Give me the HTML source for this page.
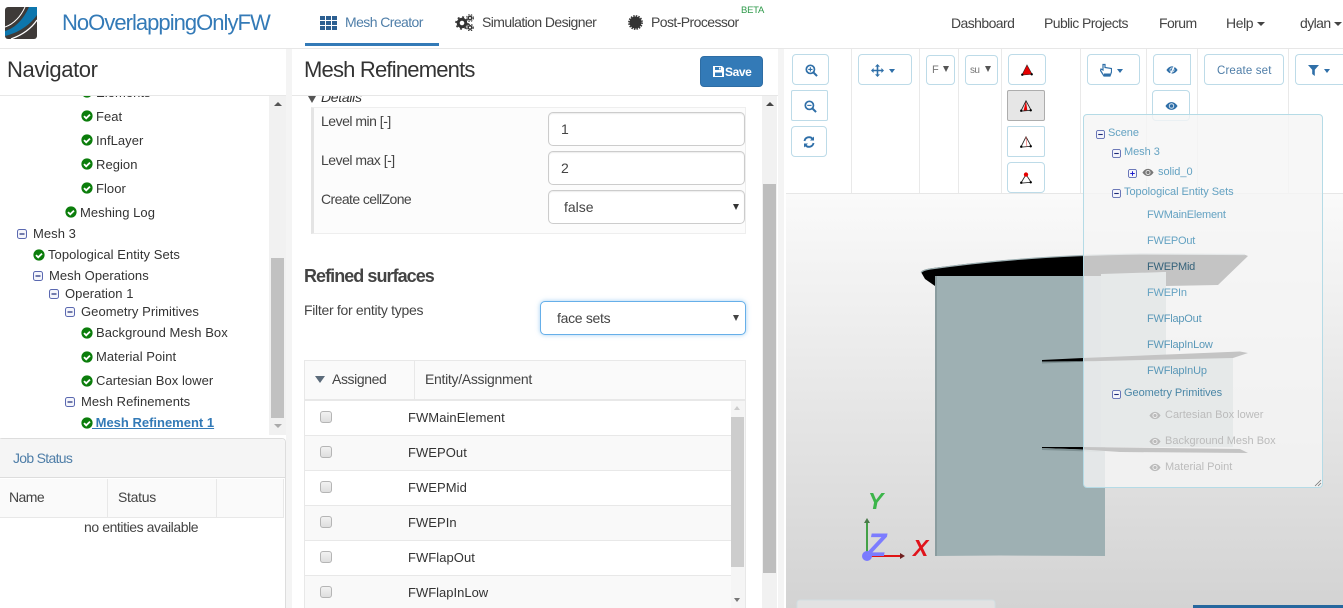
<!DOCTYPE html>
<html><head><meta charset="utf-8"><title>Mesh Refinements</title>
<style>
html,body{margin:0;padding:0;background:#fff;width:1343px;height:608px;overflow:hidden}
body{font:14px/20px "Liberation Sans",sans-serif;color:#333}
#root{position:relative;width:1343px;height:608px;overflow:hidden}
.a,.l,.n,.k,.m,.p,.pi,.b,.box{position:absolute}
.l,.n,.k,.m,.p,.pi{white-space:nowrap}
.l{letter-spacing:-.58px;color:#444}
.w{letter-spacing:-.3px}
.n{color:#333;font-size:13px;letter-spacing:.05px;margin-top:1px}
.h{font-size:22px;letter-spacing:-.8px;color:#333;line-height:30px}
.b{box-sizing:border-box;border:1px solid #bddbe8;border-radius:4px;background:#fff}
.box{box-sizing:border-box;border:1px solid #ccc;border-radius:5px;background:#fff;box-shadow:inset 0 1px 1px rgba(0,0,0,.075)}
.row{position:absolute;left:305px;width:426px;height:35px;box-sizing:border-box;border-bottom:1px solid #e8e8e8}
.cb{position:absolute;left:320px;width:12px;height:12px;box-sizing:border-box;border:1px solid #b5b5b5;border-radius:3px;background:linear-gradient(#f2f2f2,#dedede)}
.p{font-size:11px;line-height:14px;color:#64a2c2;letter-spacing:-.05px}
.f{letter-spacing:-.2px}
.pi{font-size:11px;line-height:14px;color:#bbb;font-weight:normal}
svg{display:block}
.i{position:absolute}
</style></head>
<body>
<div id="root">
<svg width="0" height="0" style="position:absolute">
<defs>
<symbol id="ck" viewBox="0 0 12 12"><circle cx="6" cy="6" r="5.6" fill="#0b7d0b"/><path d="M3 6.100l2.200 2.200L9 4.600" fill="none" stroke="#fff" stroke-width="1.800"/></symbol>
<symbol id="mn" viewBox="0 0 10 10"><rect x=".5" y=".5" width="9" height="9" rx="2" fill="#f4f5fb" stroke="#5a68b0"/><path d="M2.500 5h5" stroke="#1d2a78" stroke-width="1.200"/></symbol>
<symbol id="pl" viewBox="0 0 10 10"><rect x=".5" y=".5" width="9" height="9" rx="2" fill="#f4f5fb" stroke="#5a68b0"/><path d="M2.500 5h5M5 2.500v5" stroke="#1d1dcc" stroke-width="1.100"/></symbol>
<symbol id="eye" viewBox="0 0 14 10"><path d="M.5 5C2.500 2 4.600.8 7 .8S11.500 2 13.500 5C11.500 8 9.400 9.200 7 9.200S2.500 8 .5 5z" fill="currentColor"/><circle cx="7" cy="5" r="2.900" fill="#fff" opacity=".85"/><circle cx="7" cy="5" r="1.900" fill="currentColor"/></symbol>
<symbol id="mag" viewBox="0 0 14 14"><circle cx="5.800" cy="5.800" r="4.400" fill="none" stroke="#2f6fa8" stroke-width="1.800"/><path d="M9 9l4 4" stroke="#2f6fa8" stroke-width="2.200"/></symbol>
</defs>
</svg>

<!-- 3D viewport -->
<svg class="i" style="left:0;top:0" width="1343" height="608" viewBox="0 0 1343 608">
<defs><linearGradient id="bg" x1="0" y1="0" x2="0" y2="1"><stop offset="0" stop-color="#fafafa"/><stop offset="1" stop-color="#d3d3d3"/></linearGradient></defs>
<rect x="786" y="193" width="557" height="415" fill="url(#bg)"/>
<path d="M921 272Q922 270 930 268.500C990 260 1060 255 1140 254L1243 254L1248 256L1218 285L1166 286L935 286L925 279Z" fill="#000"/>
<path d="M921 272.500Q923 270 930 269C990 260.500 1060 255 1140 254L1245 254.500" fill="none" stroke="#9eb0b3" stroke-width="1.200"/>
<path d="M935 276L1101 276L1166 272V355H1233V447H1105V556L1000 555.500L935 556Z" fill="#9eb0b3"/>
<path d="M1101 274L1166 272V355H1233V447H1101Z" fill="#a8b7ba"/>
<path d="M935 276h2v280h-2z" fill="#8a9c9f"/>
<path d="M1042 360L1083 358L1240 351.500L1248 353L1233 358L1100 361L1042 363Z" fill="#000"/>
<path d="M1042 361.500L1100 361L1042 363.500Z" fill="#7f9194"/>
<path d="M1042 447L1083 447L1240 449L1248 453L1120 452L1083 449.500L1042 448Z" fill="#000"/>
<path d="M1042 448L1083 449.500L1105 452L1042 450Z" fill="#7f9194"/>
<path d="M867 556V522" stroke="#43a047" stroke-width="2"/><path d="M867 518l-3 5h6z" fill="#4a7a4a"/>
<path d="M867 556H901" stroke="#e01414" stroke-width="2"/><path d="M905 556l-5-3v6z" fill="#702020"/>
<circle cx="867" cy="556" r="5" fill="#7a7aff"/>
<text x="868" y="509" font-family="Liberation Sans" font-weight="bold" font-style="italic" font-size="23" fill="#3cb54a">Y</text>
<text x="913" y="556" font-family="Liberation Sans" font-weight="bold" font-style="italic" font-size="23" fill="#e0141c">X</text>
<text x="867" y="556" font-family="Liberation Sans" font-weight="bold" font-style="italic" font-size="32" fill="#7c7cff">Z</text>
<rect x="797" y="600" width="198" height="12" rx="3" fill="#e2e2e2" stroke="#d2dfe3"/>
<rect x="1193" y="605" width="150" height="4" fill="#26679e"/>
</svg>

<!-- Top navbar -->
<div class="a" style="left:0;top:48px;width:1343px;height:1px;background:#e7e7e7"></div>
<svg class="i" style="left:5px;top:7px" width="32" height="32" viewBox="0 0 32 32">
<rect width="32" height="32" rx="3" fill="#3e3a38"/>
<path d="M0 24C11 21 19 11 24 0H32V8C25 18 13 26 0 29Z" fill="#0d76ad"/>
<path d="M0 20C9 17 16 9 20 0" fill="none" stroke="#fff" stroke-width="1"/>
<path d="M6 32C17 28 26 22 32 13" fill="none" stroke="#fff" stroke-width="1.200"/>
</svg>
<div class="l" style="left:62px;top:8px;font-size:22px;line-height:30px;color:#337ab7;letter-spacing:-.97px">NoOverlappingOnlyFW</div>
<div class="a" style="left:305px;top:43px;width:134px;height:3px;background:#337ab7"></div>
<svg class="i" style="left:320px;top:16px" width="17" height="14" viewBox="0 0 17 14"><path fill="#2c5f91" d="M0 0h5v4H0zM6 0h5v4H6zM12 0h5v4h-5zM0 5h5v4H0zM6 5h5v4H6zM12 5h5v4h-5zM0 10h5v4H0zM6 10h5v4H6zM12 10h5v4h-5z"/></svg>
<div class="l" style="left:345px;top:12px;color:#4f7ea8">Mesh Creator</div>
<svg class="i" style="left:455px;top:14px" width="19" height="17" viewBox="0 0 19 17"><g fill="none" stroke="#333"><circle cx="7" cy="9" r="3.800" stroke-width="3"/><circle cx="7" cy="9" r="6" stroke-width="1.600" stroke-dasharray="2 2.700"/><circle cx="15" cy="4" r="1.800" stroke-width="1.500"/><circle cx="15" cy="4" r="3.400" stroke-width="1" stroke-dasharray="1.500 1.300"/><circle cx="15" cy="13.500" r="1.800" stroke-width="1.500"/><circle cx="15" cy="13.500" r="3.300" stroke-width="1" stroke-dasharray="1.500 1.300"/></g></svg>
<div class="l" style="left:482px;top:12px">Simulation Designer</div>
<svg class="i" style="left:628px;top:15px" width="15" height="15" viewBox="0 0 15 15"><circle cx="7.500" cy="7.500" r="6" fill="#333"/><circle cx="7.500" cy="7.500" r="6.600" fill="none" stroke="#333" stroke-width="1.600" stroke-dasharray="1.500 1.100"/></svg>
<div class="l" style="left:651px;top:12px">Post-Processor</div>
<div class="l" style="left:741px;top:4px;font-size:9.500px;line-height:14px;color:#2e9a4a;letter-spacing:-.25px">BETA</div>
<div class="l" style="left:951px;top:13px">Dashboard</div>
<div class="l" style="left:1044px;top:13px">Public Projects</div>
<div class="l" style="left:1159px;top:13px">Forum</div>
<div class="l" style="left:1226px;top:13px;letter-spacing:-.4px">Help</div>
<div class="a" style="left:1257px;top:22px;border:4px solid transparent;border-top-color:#444;border-bottom:0"></div>
<div class="l" style="left:1300px;top:13px">dylan</div>
<div class="a" style="left:1334px;top:22px;border:4px solid transparent;border-top-color:#444;border-bottom:0"></div>

<!-- Column gaps -->
<div class="a" style="left:286px;top:49px;width:6px;height:559px;background:#f4f4f4"></div>
<div class="a" style="left:778px;top:49px;width:6px;height:559px;background:#f4f4f4"></div>

<!-- Navigator -->
<div class="l h" style="left:7px;top:55px;letter-spacing:-.4px">Navigator</div>
<div class="a" style="left:0;top:95px;width:286px;height:1px;background:#e7e7e7"></div>
<div class="a" style="left:0;top:96px;width:269px;height:340px;overflow:hidden">
  <div style="position:absolute;left:0;top:-96px;width:269px;height:440px">
    <svg class="i" style="left:81px;top:86px" width="12" height="12"><use href="#ck"/></svg><div class="n" style="left:96px;top:82px">Elements</div>
    <svg class="i" style="left:81px;top:110px" width="12" height="12"><use href="#ck"/></svg><div class="n" style="left:96px;top:106px">Feat</div>
    <svg class="i" style="left:81px;top:134px" width="12" height="12"><use href="#ck"/></svg><div class="n" style="left:96px;top:130px">InfLayer</div>
    <svg class="i" style="left:81px;top:158px" width="12" height="12"><use href="#ck"/></svg><div class="n" style="left:96px;top:154px">Region</div>
    <svg class="i" style="left:81px;top:182px" width="12" height="12"><use href="#ck"/></svg><div class="n" style="left:96px;top:178px">Floor</div>
    <svg class="i" style="left:65px;top:206px" width="12" height="12"><use href="#ck"/></svg><div class="n" style="left:80px;top:202px">Meshing Log</div>
    <svg class="i" style="left:17px;top:229px" width="10" height="10"><use href="#mn"/></svg><div class="n" style="left:33px;top:223px">Mesh 3</div>
    <svg class="i" style="left:33px;top:249px" width="12" height="12"><use href="#ck"/></svg><div class="n" style="left:48px;top:244px">Topological Entity Sets</div>
    <svg class="i" style="left:33px;top:271px" width="10" height="10"><use href="#mn"/></svg><div class="n" style="left:49px;top:265px">Mesh Operations</div>
    <svg class="i" style="left:49px;top:289px" width="10" height="10"><use href="#mn"/></svg><div class="n" style="left:65px;top:283px">Operation 1</div>
    <svg class="i" style="left:65px;top:307px" width="10" height="10"><use href="#mn"/></svg><div class="n" style="left:81px;top:301px">Geometry Primitives</div>
    <svg class="i" style="left:81px;top:327px" width="12" height="12"><use href="#ck"/></svg><div class="n" style="left:96px;top:322px">Background Mesh Box</div>
    <svg class="i" style="left:81px;top:351px" width="12" height="12"><use href="#ck"/></svg><div class="n" style="left:96px;top:346px">Material Point</div>
    <svg class="i" style="left:81px;top:375px" width="12" height="12"><use href="#ck"/></svg><div class="n" style="left:96px;top:370px">Cartesian Box lower</div>
    <svg class="i" style="left:65px;top:397px" width="10" height="10"><use href="#mn"/></svg><div class="n" style="left:81px;top:391px">Mesh Refinements</div>
    <svg class="i" style="left:81px;top:417px" width="12" height="12"><use href="#ck"/></svg><div class="n" style="left:92px;top:412px;color:#337ab7;font-weight:bold;text-decoration:underline;white-space:pre;letter-spacing:0"> Mesh Refinement 1</div>
  </div>
</div>
<div class="a" style="left:269px;top:96px;width:17px;height:339px;background:#f1f1f1"></div>
<div class="a" style="left:271px;top:258px;width:13px;height:160px;background:#c1c1c1"></div>
<div class="a" style="left:274px;top:102px;border:4px solid transparent;border-bottom-color:#555;border-top:0"></div>
<div class="a" style="left:274px;top:424px;border:4px solid transparent;border-top-color:#aaa;border-bottom:0"></div>

<!-- Job status -->
<div class="a" style="left:-2px;top:438px;width:288px;height:170px;box-sizing:border-box;border:1px solid #ddd;border-bottom:0;border-radius:4px 4px 0 0;background:#fff"></div>
<div class="a" style="left:0;top:439px;width:285px;height:39px;background:#f5f5f5;border-bottom:1px solid #ddd;box-sizing:border-box;border-top-right-radius:4px"></div>
<div class="l" style="left:13px;top:448px;color:#4f7ea8;letter-spacing:-.7px">Job Status</div>
<div class="a" style="left:0;top:479px;width:283px;height:39px;background:#fafafa;border-bottom:1px solid #e8e8e8;box-sizing:border-box"></div>
<div class="a" style="left:107px;top:479px;width:1px;height:39px;background:#e8e8e8"></div>
<div class="a" style="left:216px;top:479px;width:1px;height:39px;background:#e8e8e8"></div>
<div class="a" style="left:283px;top:479px;width:1px;height:39px;background:#e8e8e8"></div>
<div class="l" style="left:9px;top:487px">Name</div>
<div class="l w" style="left:118px;top:487px">Status</div>
<div class="l" style="left:84px;top:517px;letter-spacing:-.42px">no entities available</div>

<!-- Middle panel -->
<div class="l h" style="left:304px;top:55px">Mesh Refinements</div>
<div class="a" style="left:700px;top:56px;width:63px;height:31px;border-radius:4px;background:#337ab7;border:1px solid #2e6da4;box-sizing:border-box"></div>
<svg class="i" style="left:713px;top:66px" width="11" height="11" viewBox="0 0 11 11"><path d="M0 0h9l2 2v9H0z" fill="#fff"/><path d="M2 1h6v3H2zM2 6.500h7V10H2z" fill="#337ab7"/><path d="M6 1.500h1.500v2H6z" fill="#fff"/></svg>
<div class="l" style="left:725px;top:62px;font-size:12px;color:#fff;font-weight:bold;letter-spacing:-.4px">Save</div>
<div class="a" style="left:292px;top:95px;width:486px;height:1px;background:#e7e7e7"></div>

<div class="a" style="left:292px;top:96px;width:470px;height:512px;overflow:hidden">
  <div class="l w" style="left:29px;top:-9px;font-style:italic;color:#333">Details</div>
</div>
<div class="a" style="left:308px;top:96px;border:4.500px solid transparent;border-top:7px solid #555;border-bottom:0"></div>
<div class="a" style="left:311px;top:107px;width:435px;height:127px;box-sizing:border-box;background:#fcfcfc;border:1px solid #eee;border-left:3px solid #e4e4e4"></div>
<div class="l" style="left:321px;top:111px;letter-spacing:-.5px">Level min [-]</div>
<div class="l" style="left:321px;top:150px;letter-spacing:-.5px">Level max [-]</div>
<div class="l" style="left:321px;top:189px">Create cellZone</div>
<div class="box" style="left:548px;top:112px;width:197px;height:34px"></div><div class="l w" style="left:561px;top:119px">1</div>
<div class="box" style="left:548px;top:151px;width:197px;height:34px"></div><div class="l w" style="left:561px;top:158px">2</div>
<div class="box" style="left:548px;top:190px;width:197px;height:34px"></div><div class="l" style="left:564px;top:197px;letter-spacing:0">false</div>
<div class="a" style="left:733px;top:204px;border:3.500px solid transparent;border-top:6px solid #333;border-bottom:0"></div>

<div class="l" style="left:304px;top:264px;font-size:18px;line-height:24px;font-weight:bold;color:#444;letter-spacing:-.95px">Refined surfaces</div>
<div class="l w" style="left:304px;top:300px">Filter for entity types</div>
<div class="box" style="left:540px;top:301px;width:206px;height:34px;border-color:#66afe9;box-shadow:0 0 5px rgba(102,175,233,.6)"></div>
<div class="l w" style="left:557px;top:308px">face sets</div>
<div class="a" style="left:733px;top:315px;border:3.500px solid transparent;border-top:6px solid #444;border-bottom:0"></div>

<div class="a" style="left:304px;top:360px;width:442px;height:40px;box-sizing:border-box;background:#fafafa;border:1px solid #e8e8e8"></div>
<div class="a" style="left:414px;top:361px;width:1px;height:39px;background:#e8e8e8"></div>
<div class="a" style="left:315px;top:376px;border:5px solid transparent;border-top:7px solid #5c6b7a;border-bottom:0"></div>
<div class="l w" style="left:332px;top:369px;letter-spacing:-.4px">Assigned</div>
<div class="l w" style="left:425px;top:369px">Entity/Assignment</div>
<div class="a" style="left:304px;top:400px;width:1px;height:208px;background:#e8e8e8"></div>
<div class="a" style="left:745px;top:400px;width:1px;height:208px;background:#e8e8e8"></div>
<div class="a" style="left:305px;top:400px;width:440px;height:1px;background:#e8e8e8"></div>
<div class="row" style="top:401px"></div>
<div class="row" style="top:436px;background:#f9f9f9"></div>
<div class="row" style="top:471px"></div>
<div class="row" style="top:506px;background:#f9f9f9"></div>
<div class="row" style="top:541px"></div>
<div class="row" style="top:576px;height:32px;background:#f9f9f9;border-bottom:0"></div>
<div class="cb" style="top:411px"></div><div class="n" style="left:408px;top:407px">FWMainElement</div>
<div class="cb" style="top:446px"></div><div class="n" style="left:408px;top:442px">FWEPOut</div>
<div class="cb" style="top:481px"></div><div class="n" style="left:408px;top:477px">FWEPMid</div>
<div class="cb" style="top:516px"></div><div class="n" style="left:408px;top:512px">FWEPIn</div>
<div class="cb" style="top:551px"></div><div class="n" style="left:408px;top:547px">FWFlapOut</div>
<div class="cb" style="top:586px"></div><div class="n" style="left:408px;top:582px;letter-spacing:0">FWFlapInLow</div>
<div class="a" style="left:731px;top:401px;width:14px;height:207px;background:#f5f5f5"></div>
<div class="a" style="left:731px;top:417px;width:13px;height:150px;background:#cdcdcd"></div>
<div class="a" style="left:734px;top:406px;border:3.500px solid transparent;border-bottom:4px solid #ccc;border-top:0"></div>
<div class="a" style="left:734px;top:598px;border:3.500px solid transparent;border-top:4px solid #777;border-bottom:0"></div>

<div class="a" style="left:762px;top:96px;width:15px;height:512px;background:#f1f1f1"></div>
<div class="a" style="left:763px;top:184px;width:13px;height:389px;background:#bebebe"></div>
<div class="a" style="left:766px;top:102px;border:4px solid transparent;border-bottom-color:#444;border-top:0"></div>

<!-- Toolbar -->
<div class="a" style="left:784px;top:49px;width:559px;height:144px;background:#fff"></div>
<div class="a" style="left:786px;top:193px;width:557px;height:1px;background:#e7e7e7"></div>
<div class="a" style="left:851px;top:49px;width:1px;height:144px;background:#e9e9e9"></div>
<div class="a" style="left:919px;top:49px;width:1px;height:144px;background:#e9e9e9"></div>
<div class="a" style="left:958px;top:49px;width:1px;height:144px;background:#e9e9e9"></div>
<div class="a" style="left:1001px;top:49px;width:1px;height:144px;background:#e9e9e9"></div>
<div class="a" style="left:1080px;top:49px;width:1px;height:144px;background:#e9e9e9"></div>
<div class="a" style="left:1146px;top:49px;width:1px;height:144px;background:#e9e9e9"></div>
<div class="a" style="left:1197px;top:49px;width:1px;height:144px;background:#e9e9e9"></div>
<div class="a" style="left:1288px;top:49px;width:1px;height:144px;background:#e9e9e9"></div>

<div class="b" style="left:792px;top:54px;width:37px;height:31px"></div>
<svg class="i" style="left:805px;top:64px" width="13" height="13" viewBox="0 0 14 14"><use href="#mag"/><path d="M3.500 5.800h4.600M5.800 3.500v4.600" stroke="#2f6fa8" stroke-width="1.200"/></svg>
<div class="b" style="left:791px;top:90px;width:37px;height:31px;border-radius:2px"></div>
<svg class="i" style="left:804px;top:100px" width="13" height="13" viewBox="0 0 14 14"><use href="#mag"/><path d="M3.500 5.800h4.600" stroke="#2f6fa8" stroke-width="1.200"/></svg>
<div class="b" style="left:791px;top:126px;width:36px;height:31px"></div>
<svg class="i" style="left:803px;top:136px" width="12" height="12" viewBox="0 0 12 12"><path d="M1.500 5A4.600 4.600 0 0 1 9.700 3M10.500 7A4.600 4.600 0 0 1 2.300 9" fill="none" stroke="#2f6fa8" stroke-width="1.900"/><path d="M11 .5V4.500H7zM1 11.500V7.500H5z" fill="#2f6fa8"/></svg>

<div class="b" style="left:858px;top:54px;width:54px;height:31px"></div>
<svg class="i" style="left:871px;top:64px" width="13" height="13" viewBox="0 0 13 13"><path d="M6.500 0L9 2.600H7.300V5.700H10.400V4L13 6.500L10.400 9V7.300H7.300V10.400H9L6.500 13L4 10.400H5.700V7.300H2.600V9L0 6.500L2.600 4V5.700H5.700V2.600H4z" fill="#2f6fa8"/></svg>
<div class="a" style="left:889px;top:69px;border:3.500px solid transparent;border-top:4px solid #2f6fa8;border-bottom:0"></div>

<div class="b" style="left:926px;top:55px;width:29px;height:30px"></div>
<div class="l" style="left:932px;top:61px;font-size:11px;line-height:18px;color:#777">F</div>
<div class="a" style="left:943px;top:66px;border:3.500px solid transparent;border-top:6px solid #555;border-bottom:0"></div>
<div class="b" style="left:965px;top:55px;width:33px;height:30px"></div>
<div class="l" style="left:970px;top:62px;font-size:10px;line-height:18px;color:#777;width:12px;overflow:hidden">su</div>
<div class="a" style="left:985px;top:66px;border:3.500px solid transparent;border-top:6px solid #555;border-bottom:0"></div>

<div class="b" style="left:1008px;top:54px;width:38px;height:31px"></div>
<svg class="i" style="left:1021px;top:64px" width="12" height="12" viewBox="0 0 14 14"><path d="M7 1L13 12L1 13z" fill="#e60000" stroke="#222" stroke-width=".6"/><circle cx="1.500" cy="12.500" r="1.400"/><circle cx="12.500" cy="12" r="1.400"/></svg>
<div class="b" style="left:1007px;top:90px;width:38px;height:31px;background:#e6e6e6;border-color:#adadad;border-radius:2px"></div>
<svg class="i" style="left:1020px;top:100px" width="12" height="12" viewBox="0 0 14 14"><path d="M7 1L8.500 12L4 13z" fill="#e60000"/><path d="M7 1L13 12L1 13z" fill="none" stroke="#222"/><circle cx="1.500" cy="12.500" r="1.400"/><circle cx="12.500" cy="12" r="1.400"/></svg>
<div class="b" style="left:1007px;top:126px;width:38px;height:31px;border-radius:2px"></div>
<svg class="i" style="left:1020px;top:136px" width="12" height="12" viewBox="0 0 14 14"><path d="M7 1L13 12L1 13z" fill="none" stroke="#222"/><path d="M7 1L8 12" stroke="#e66" stroke-width=".8"/><circle cx="1.500" cy="12.500" r="1.400"/><circle cx="12.500" cy="12" r="1.400"/></svg>
<div class="b" style="left:1007px;top:162px;width:38px;height:31px"></div>
<svg class="i" style="left:1020px;top:172px" width="12" height="12" viewBox="0 0 14 14"><path d="M7 3L13 12L1 13z" fill="none" stroke="#222"/><circle cx="7" cy="3" r="2.500" fill="#e60000"/><circle cx="1.500" cy="12.500" r="1.400"/><circle cx="12.500" cy="12" r="1.400"/></svg>

<div class="b" style="left:1087px;top:54px;width:53px;height:31px"></div>
<svg class="i" style="left:1100px;top:63px" width="12" height="14" viewBox="0 0 12 14"><path d="M3 1.500V7L1 6 .5 7.500 4 13H10L11.500 9V5.500L5 4.500V1.500z" fill="#fff" stroke="#2f6fa8" stroke-width="1.200"/><path d="M4 10.500H10V13H4z" fill="#2f6fa8"/></svg>
<div class="a" style="left:1117px;top:69px;border:3.500px solid transparent;border-top:4px solid #2f6fa8;border-bottom:0"></div>

<div class="b" style="left:1153px;top:54px;width:38px;height:31px;border-radius:4px 0 0 4px"></div>
<svg class="i" style="left:1166px;top:65px" width="12" height="10" viewBox="0 0 14 10"><use href="#eye" color="#2f6fa8"/><path d="M10 0L5 10" stroke="#fff" stroke-width="1.500"/></svg>
<div class="b" style="left:1152px;top:90px;width:38px;height:31px"></div>
<svg class="i" style="left:1165px;top:101px" width="13" height="10" viewBox="0 0 14 10"><use href="#eye" color="#2f6fa8"/></svg>
<div class="b" style="left:1204px;top:54px;width:80px;height:31px"></div>
<div class="l" style="left:1217px;top:61px;font-size:11.500px;color:#4f7ea8;letter-spacing:.15px">Create set</div>
<div class="b" style="left:1295px;top:54px;width:48px;height:31px;border-right:0;border-radius:4px 0 0 4px"></div>
<svg class="i" style="left:1308px;top:65px" width="11" height="11" viewBox="0 0 11 11"><path d="M0 0H11L6.800 4.700V11L4.200 9V4.700z" fill="#2f6fa8"/></svg>
<div class="a" style="left:1324px;top:69px;border:3.500px solid transparent;border-top:4px solid #2f6fa8;border-bottom:0"></div>

<!-- Scene panel -->
<div class="a" style="left:1083px;top:114px;width:240px;height:374px;box-sizing:border-box;border:1px solid #b5dbe6;border-radius:4px;background:rgba(245,245,245,.8)"></div>
<svg class="i" style="left:1096px;top:130px" width="9" height="9" viewBox="0 0 10 10"><use href="#mn"/></svg><div class="p" style="left:1108px;top:126px">Scene</div>
<svg class="i" style="left:1112px;top:149px" width="9" height="9" viewBox="0 0 10 10"><use href="#mn"/></svg><div class="p" style="left:1124px;top:145px">Mesh 3</div>
<svg class="i" style="left:1128px;top:169px" width="9" height="9" viewBox="0 0 10 10"><use href="#pl"/></svg>
<svg class="i" style="left:1142px;top:168px" width="12" height="9" viewBox="0 0 14 10"><use href="#eye" color="#777"/></svg><div class="p" style="left:1158px;top:165px">solid_0</div>
<svg class="i" style="left:1112px;top:189px" width="9" height="9" viewBox="0 0 10 10"><use href="#mn"/></svg><div class="p" style="left:1124px;top:185px">Topological Entity Sets</div>
<div class="p f" style="left:1147px;top:208px">FWMainElement</div>
<div class="p f" style="left:1147px;top:234px">FWEPOut</div>
<div class="p f" style="left:1147px;top:260px;color:#35627a">FWEPMid</div>
<div class="p f" style="left:1147px;top:286px">FWEPIn</div>
<div class="p f" style="left:1147px;top:312px;color:#5a98b8">FWFlapOut</div>
<div class="p f" style="left:1147px;top:338px;color:#5a98b8">FWFlapInLow</div>
<div class="p f" style="left:1147px;top:364px;color:#5a98b8">FWFlapInUp</div>
<svg class="i" style="left:1112px;top:390px" width="9" height="9" viewBox="0 0 10 10"><use href="#mn"/></svg><div class="p" style="left:1124px;top:386px;color:#4a86a6">Geometry Primitives</div>
<svg class="i" style="left:1149px;top:411px" width="12" height="9" viewBox="0 0 14 10"><use href="#eye" color="#bbb"/></svg><div class="pi" style="left:1165px;top:408px">Cartesian Box lower</div>
<svg class="i" style="left:1149px;top:437px" width="12" height="9" viewBox="0 0 14 10"><use href="#eye" color="#bbb"/></svg><div class="pi" style="left:1165px;top:434px">Background Mesh Box</div>
<svg class="i" style="left:1149px;top:463px" width="12" height="9" viewBox="0 0 14 10"><use href="#eye" color="#bbb"/></svg><div class="pi" style="left:1165px;top:460px">Material Point</div>
<svg class="i" style="left:1314px;top:479px" width="8" height="8" viewBox="0 0 8 8"><path d="M1 7L7 1M4 7L7 4" stroke="#777" stroke-width=".8"/></svg>
</div>
</body></html>
